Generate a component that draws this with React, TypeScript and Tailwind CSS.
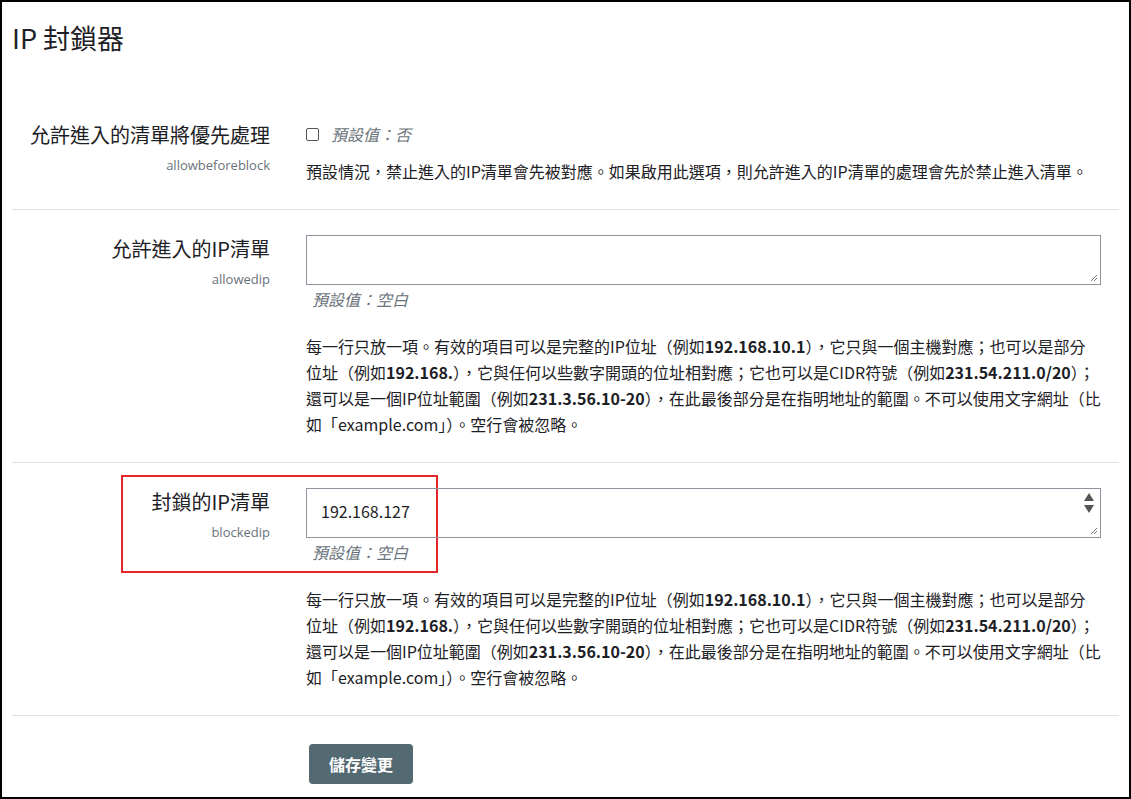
const font = { fontFamily: '"Noto Sans CJK TC", "Open Sans", sans-serif' };

function Desc() {
  return (
    <p className="text-[16px] leading-[26px] text-[#1d2125] mt-[22px]">
      每一行只放一項。有效的項目可以是完整的IP位址（例如<b>192.168.10.1</b>），它只與一個主機對應；也可以是部分位址（例如<b>192.168.</b>），它與任何以些數字開頭的位址相對應；它也可以是CIDR符號（例如<b>231.54.211.0/20</b>）；還可以是一個IP位址範圍（例如<b>231.3.56.10-20</b>），在此最後部分是在指明地址的範圍。不可以使用文字網址（比如「example.com」）。空行會被忽略。
    </p>
  );
}

function Row({ label, name, children }: { label: string; name: string; children: React.ReactNode }) {
  return (
    <div className="grid grid-cols-[258px_1fr] gap-9 pr-[18px] pt-[24px] pb-[25px] border-b border-[#dee2e6]">
      <div className="text-right">
        <div className="text-[20px] leading-[30px] text-[#1d2125] pl-[14px]">{label}</div>
        <div className="text-[13px] text-[#6a737b] mt-[6px]" style={{ fontFamily: '"Open Sans", sans-serif' }}>{name}</div>
      </div>
      <div>{children}</div>
    </div>
  );
}

export default function App() {
  return (
    <div style={font} className="w-[1131px] h-[799px] border-2 border-black bg-white overflow-hidden">
      <div className="px-[10px]">
        <h2 className="text-[27px] leading-[40px] text-[#1d2125] pt-[16px] pb-[38px]">IP 封鎖器</h2>
        <div>
          <Row label="允許進入的清單將優先處理" name="allowbeforeblock">
            <div className="flex items-center gap-[12px] pt-[2px]">
              <span className="w-[13px] h-[13px] border border-[#555] rounded-[2px]" />
              <span className="italic text-[16px] text-[#6a737b]">預設值：否</span>
            </div>
            <p className="text-[16px] leading-[26px] text-[#1d2125] mt-[12px]">
              預設情況，禁止進入的IP清單會先被對應。如果啟用此選項，則允許進入的IP清單的處理會先於禁止進入清單。
            </p>
          </Row>
          <Row label="允許進入的IP清單" name="allowedip">
            <div className="relative h-[50px] border border-[#8f959e] mt-[1px]">
              <svg className="absolute right-[2px] bottom-[2px]" width="10" height="10" viewBox="0 0 10 10"><path d="M9 3L3 9M9 6L6 9" stroke="#777" strokeWidth="1" /></svg>
            </div>
            <div className="italic text-[16px] text-[#6a737b] mt-[2px] pl-[6px]">預設值：空白</div>
            <Desc />
          </Row>
          <div className="relative">
            <div className="absolute left-[109px] top-[12px] w-[317px] h-[98px] border-2 border-[#e4262b]" />
            <Row label="封鎖的IP清單" name="blockedip">
              <div className="relative h-[50px] border border-[#8f959e] mt-[1px] px-[14px] pt-[10px] text-[16px] text-[#1d2125]">
                192.168.127
                <div className="absolute right-0 top-0 bottom-0 w-[22px] flex flex-col items-center pt-[3px] gap-[2px]">
                  <svg width="12" height="10" viewBox="0 0 12 10"><path d="M6 1L11 9H1Z" fill="#555" /></svg>
                  <svg width="12" height="10" viewBox="0 0 12 10"><path d="M1 1H11L6 9Z" fill="#555" /></svg>
                  <svg className="absolute right-[2px] bottom-[2px]" width="10" height="10" viewBox="0 0 10 10"><path d="M9 3L3 9M9 6L6 9" stroke="#777" strokeWidth="1" /></svg>
                </div>
              </div>
              <div className="italic text-[16px] text-[#6a737b] mt-[2px] pl-[6px]">預設值：空白</div>
              <Desc />
            </Row>
          </div>
          <div className="pt-[28px] pl-[297px]">
            <button className="bg-[#546a73] text-white text-[16px] font-semibold rounded-[4px] w-[104px] h-[40px]">儲存變更</button>
          </div>
        </div>
      </div>
    </div>
  );
}
